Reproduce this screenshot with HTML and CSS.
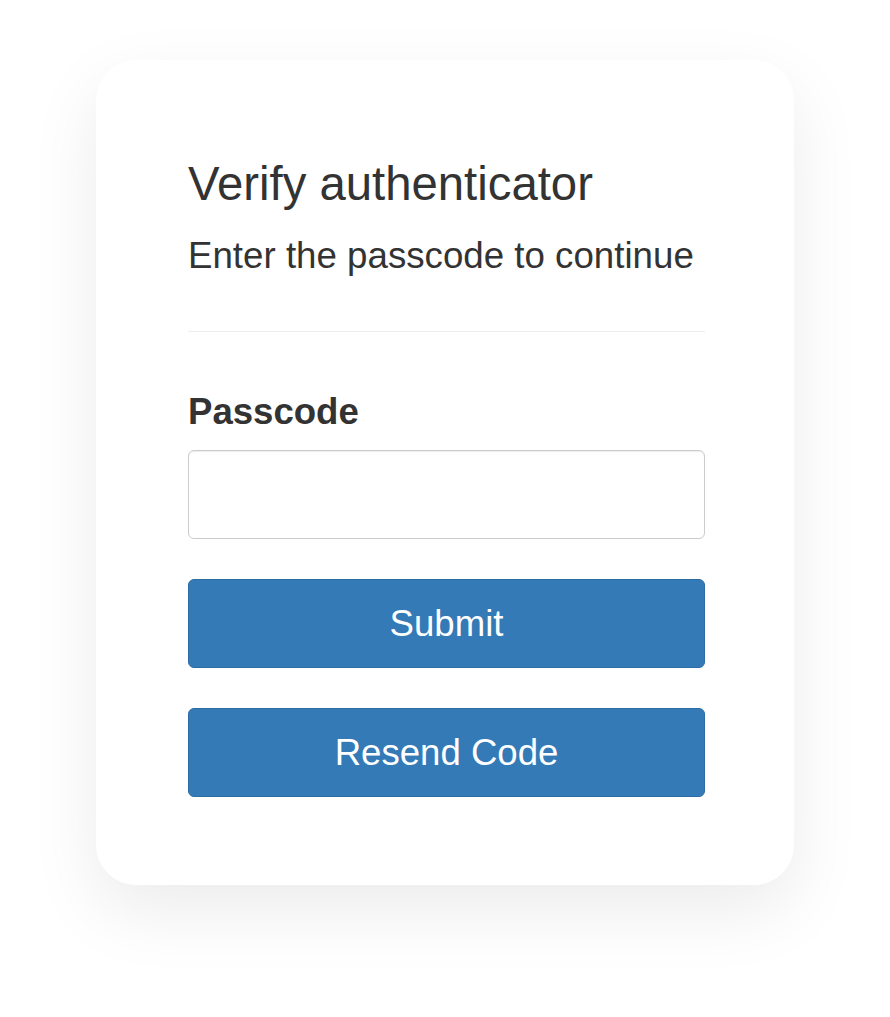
FILE: index.html
```html
<!DOCTYPE html>
<html lang="en">
<head>
<meta charset="utf-8">
<title>Verify authenticator</title>
<link rel="stylesheet" href="styles.css">
</head>
<body>
<main class="page">
  <section class="card">
    <h1 class="title">Verify authenticator</h1>
    <p class="subtitle">Enter the passcode to continue</p>
    <hr class="divider">
    <form class="form">
      <label class="label" for="passcode">Passcode</label>
      <input class="input" id="passcode" type="text">
      <button class="btn btn-submit" type="button">Submit</button>
      <button class="btn btn-resend" type="button">Resend Code</button>
    </form>
  </section>
</main>
</body>
</html>
```

FILE: styles.css
```css
* { box-sizing: border-box; }

html, body {
  margin: 0;
  padding: 0;
  background: #ffffff;
}

body {
  font-family: "Liberation Sans", Arial, sans-serif;
  color: #333333;
}

.page {
  display: flex;
  justify-content: center;
  padding-top: 60px;
  height: 1017px;
}

.card {
  width: 698px;
  height: 825px;
  background: #ffffff;
  border-radius: 40px;
  box-shadow: 0 26px 70px rgba(0, 0, 0, 0.08);
  padding: 98px 89px 88px 92px;
  display: flex;
  flex-direction: column;
}

.title {
  margin: 0;
  font-size: 47.3px;
  line-height: 52px;
  font-weight: 400;
  color: #333333;
}

.subtitle {
  margin: 26px 0 0;
  font-size: 36.7px;
  line-height: 40px;
  color: #333333;
}

.divider {
  margin: 55px 0 0;
  border: 0;
  border-top: 1px solid #eeeeee;
  height: 0;
}

.form {
  display: flex;
  flex-direction: column;
  margin-top: 60px;
}

.label {
  font-size: 36.6px;
  line-height: 40px;
  font-weight: 700;
  color: #333333;
}

.input {
  margin-top: 18px;
  height: 89px;
  width: 100%;
  border: 1px solid #cccccc;
  border-radius: 6px;
  box-shadow: inset 0 1px 1px rgba(0, 0, 0, 0.075);
  background: #ffffff;
  font-family: inherit;
  font-size: 36px;
  padding: 0 16px;
}

.btn {
  width: 100%;
  height: 89px;
  border: 1px solid #2e6da4;
  border-radius: 6px;
  background: #337ab7;
  color: #ffffff;
  font-family: "Liberation Sans", Arial, sans-serif;
  font-size: 36.6px;
  line-height: 40px;
  padding: 0;
}

.btn-submit {
  margin-top: 40px;
}

.btn-resend {
  margin-top: 40px;
}
```
